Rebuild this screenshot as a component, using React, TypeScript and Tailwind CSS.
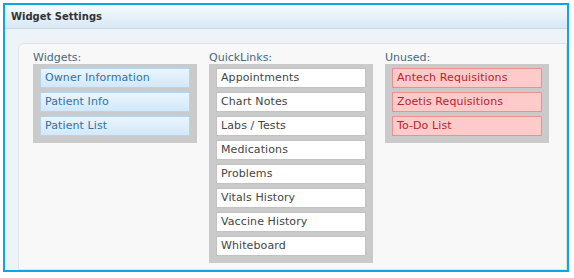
const widgets = ["Owner Information", "Patient Info", "Patient List"];
const quickLinks = [
  "Appointments",
  "Chart Notes",
  "Labs / Tests",
  "Medications",
  "Problems",
  "Vitals History",
  "Vaccine History",
  "Whiteboard",
];
const unused = ["Antech Requisitions", "Zoetis Requisitions", "To-Do List"];

const itemStyles = {
  widget: "border-[#b3d5f0] bg-gradient-to-b from-[#eaf5fd] to-[#d3e8f8] text-[#2c73ad]",
  link: "border-[#c2c2c2] bg-white text-[#444]",
  unused: "border-[#ef8f8f] bg-[#ffcaca] text-[#b3262f]",
};

function Column({ title, items, kind }: { title: string; items: string[]; kind: keyof typeof itemStyles }) {
  return (
    <div className="w-[164px]">
      <div className="h-[14px] text-[11px] leading-[15px] text-[#46687f]">{title}</div>
      <div className="flex flex-col gap-[4px] bg-[#cacaca] px-[7px] pt-[4px] pb-[7px]">
        {items.map((item) => (
          <div
            key={item}
            className={`h-[20px] border pl-[4px] text-[11px] leading-[18px] tracking-[0.1px] ${itemStyles[kind]}`}
          >
            {item}
          </div>
        ))}
      </div>
    </div>
  );
}

export default function App() {
  return (
    <div className="h-[278px] w-[574px] bg-white pl-[3px] pt-[3px] font-['DejaVu_Sans',sans-serif]">
      <div className="flex h-[269px] w-[566px] flex-col overflow-hidden border-2 border-[#0ea6e1]">
        <div className="h-[24px] shrink-0 border-b border-[#cbd9e4] bg-gradient-to-b from-[#f5fafe] to-[#d8e8f5] pl-[6px] text-[10px] font-bold leading-[23px] text-[#333]">
          Widget Settings
        </div>
        <div className="flex-1 bg-[#eef3f8] pl-[13px] pt-[14px]">
          <div className="h-full rounded-tl-[6px] border border-[#dde3e9] bg-[#f8f8f8] pl-[14px] pt-[6px]">
            <div className="flex gap-[12px]">
              <Column title="Widgets:" items={widgets} kind="widget" />
              <Column title="QuickLinks:" items={quickLinks} kind="link" />
              <Column title="Unused:" items={unused} kind="unused" />
            </div>
          </div>
        </div>
      </div>
    </div>
  );
}
